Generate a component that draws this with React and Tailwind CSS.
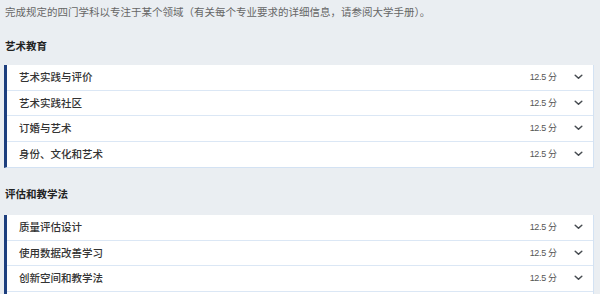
import React from "react";

const Chevron = () => (
  <svg width="9" height="6" viewBox="0 0 9 6" className="block">
    <path d="M1.2 1.2 L4.5 4.3 L7.8 1.2" fill="none" stroke="#474c51" strokeWidth="1.5" strokeLinecap="round" strokeLinejoin="round" />
  </svg>
);

const Row = ({ title, last }) => (
  <div className={`flex items-center h-[25.5px] pl-[12px] pr-[10px] ${last ? "" : "border-b border-[#dbe7f5]"}`}>
    <span className="flex-1 text-[10.5px] leading-[14px] font-medium text-[#333]">{title}</span>
    <span className="text-[9px] text-[#555] leading-[12px]">
      <span className="font-['Liberation_Sans',sans-serif] tracking-[-0.3px]">12.5</span> 分
    </span>
    <span className="ml-[17px]">
      <Chevron />
    </span>
  </div>
);

const Card = ({ items, open }) => (
  <div
    className={`ml-[4px] w-[590px] bg-white border-l-[3px] border-l-[#1d3f7e] border-r border-r-[#d3e2f3] ${
      open ? "" : "border-b border-b-[#d3e2f3]"
    }`}
  >
    {items.map((t, i) => (
      <Row key={t} title={t} last={!open && i === items.length - 1} />
    ))}
    {open && <div className="h-[20px]" />}
  </div>
);

export default function App() {
  return (
    <div className="w-[600px] h-[294px] overflow-hidden bg-[#eaeef2] font-['Noto_Sans_CJK_SC','Noto_Sans',sans-serif]">
      <p className="pl-[5px] pt-[5px] text-[10.5px] leading-[14px] text-[#666]">
        完成规定的四门学科以专注于某个领域（有关每个专业要求的详细信息，请参阅大学手册）。
      </p>
      <h3 className="mt-[20px] pl-[5px] text-[10.5px] leading-[14px] font-bold text-[#222]">艺术教育</h3>
      <div className="mt-[12px]">
        <Card items={["艺术实践与评价", "艺术实践社区", "订婚与艺术", "身份、文化和艺术"]} />
      </div>
      <h3 className="mt-[19px] pl-[5px] text-[10.5px] leading-[14px] font-bold text-[#222]">评估和教学法</h3>
      <div className="mt-[14px]">
        <Card open items={["质量评估设计", "使用数据改善学习", "创新空间和教学法"]} />
      </div>
    </div>
  );
}
